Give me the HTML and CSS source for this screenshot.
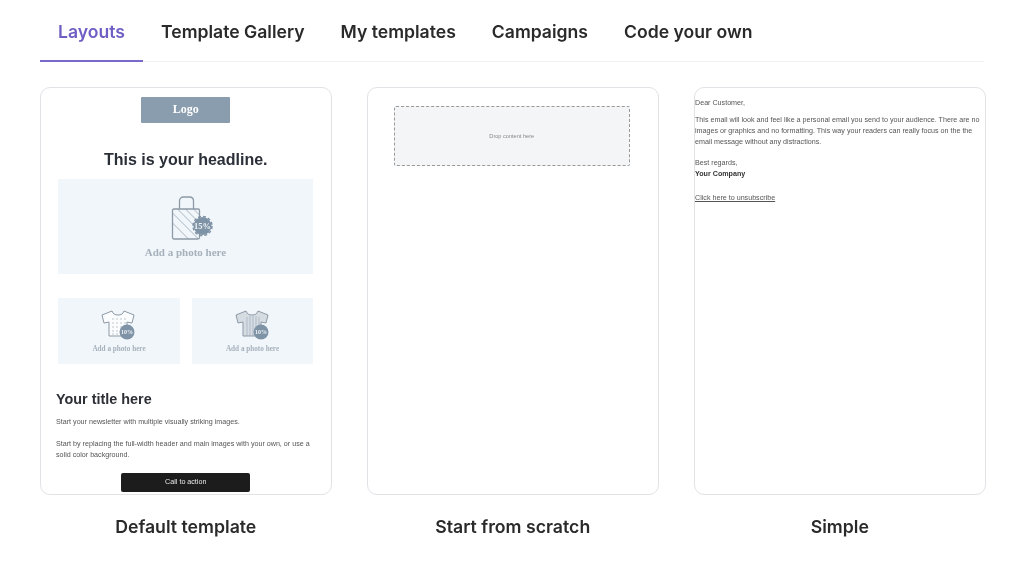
FILE: index.html
```html
<!DOCTYPE html>
<html lang="en">
<head>
    <meta charset="UTF-8">
    <title>Layouts</title>
    <link rel="stylesheet" href="styles.css">
</head>
<body>
    <nav class="tabs">
        <a class="tab active">Layouts</a>
        <a class="tab">Template Gallery</a>
        <a class="tab">My templates</a>
        <a class="tab">Campaigns</a>
        <a class="tab">Code your own</a>
    </nav>

    <div class="layouts">
        <div class="layout">
            <div class="card card-default">
                <div class="logo">Logo</div>
                <h2 class="headline">This is your headline.</h2>
                <div class="photo photo-main">
                    <svg width="60" height="46" viewBox="-15.5 0 60 46">
                        <defs>
                            <clipPath id="bagclip"><rect x="1" y="13" width="27" height="30"/></clipPath>
                        </defs>
                        <path d="M8 13V5c0-3 2-4 4-4h6c2 0 4 1 4 4v8" fill="none" stroke="#8c99a6" stroke-width="1.3"/>
                        <g clip-path="url(#bagclip)" stroke="#a9b4bf" stroke-width="1" fill="none">
                            <path d="M-6 20L18 44M-2 14L28 44M6 13L36 43M14 13L44 43M22 13L52 43"/>
                        </g>
                        <rect x="1" y="13" width="27" height="30" rx="1.500" fill="none" stroke="#8c99a6" stroke-width="1.3"/>
                        <circle cx="31" cy="30" r="9" fill="#7f93a6"/>
                        <circle cx="31" cy="30" r="9.500" fill="none" stroke="#7f93a6" stroke-width="1.500" stroke-dasharray="3 2"/>
                        <text class="badge-text" x="31" y="33" text-anchor="middle" font-size="8.500">15%</text>
                    </svg>
                    <div class="photo-label">Add a photo here</div>
                </div>
                <div class="photo-row">
                    <div class="photo photo-small">
                        <svg width="36" height="30" viewBox="0 0 36 30">
                            <path d="M11 1L1 5l2 8 5-1v14h18V12l5 1 2-8-10-4c-1 3-3 4-6 4s-5-1-6-4z" fill="#fbfcfd" stroke="#8c99a6" stroke-width="1"/>
                            <g fill="#a9b4bf">
                                <circle cx="12" cy="9" r=".7"/><circle cx="16" cy="9" r=".7"/><circle cx="20" cy="9" r=".7"/><circle cx="24" cy="9" r=".7"/>
                                <circle cx="12" cy="13" r=".7"/><circle cx="16" cy="13" r=".7"/><circle cx="20" cy="13" r=".7"/><circle cx="24" cy="13" r=".7"/>
                                <circle cx="12" cy="17" r=".7"/><circle cx="16" cy="17" r=".7"/><circle cx="20" cy="17" r=".7"/>
                                <circle cx="12" cy="21" r=".7"/><circle cx="16" cy="21" r=".7"/><circle cx="12" cy="24" r=".7"/><circle cx="16" cy="24" r=".7"/>
                            </g>
                            <circle cx="26" cy="22" r="7.500" fill="#7f93a6"/>
                            <text class="badge-text" x="26" y="24" text-anchor="middle" font-size="6">10%</text>
                        </svg>
                        <div class="photo-label">Add a photo here</div>
                    </div>
                    <div class="photo photo-small">
                        <svg width="36" height="30" viewBox="0 0 36 30">
                            <path d="M11 1L1 5l2 8 5-1v14h18V12l5 1 2-8-10-4c-1 3-3 4-6 4s-5-1-6-4z" fill="#d5dce2" stroke="#8c99a6" stroke-width="1"/>
                            <path d="M12 7v19M15 6v20M18 6v20M21 6v20M24 7v19" stroke="#a3afba" stroke-width=".7"/>
                            <circle cx="26" cy="22" r="7.500" fill="#7f93a6"/>
                            <text class="badge-text" x="26" y="24" text-anchor="middle" font-size="6">10%</text>
                        </svg>
                        <div class="photo-label">Add a photo here</div>
                    </div>
                </div>
                <h3 class="title">Your title here</h3>
                <p class="small-text">Start your newsletter with multiple visually striking images.</p>
                <p class="small-text">Start by replacing the full-width header and main images with your own, or use a solid color background.</p>
                <div class="cta">Call to action</div>
            </div>
            <div class="caption">Default template</div>
        </div>

        <div class="layout">
            <div class="card card-scratch">
                <div class="dropzone">Drop content here</div>
            </div>
            <div class="caption">Start from scratch</div>
        </div>

        <div class="layout">
            <div class="card card-simple">
                <p>Dear Customer,</p>
                <p>This email will look and feel like a personal email you send to your audience. There are no images or graphics and no formatting. This way your readers can really focus on the the email message without any distractions.</p>
                <p>Best regards,<br><b>Your Company</b></p>
                <p><u>Click here to unsubscribe</u></p>
            </div>
            <div class="caption">Simple</div>
        </div>
    </div>
</body>
</html>
```

FILE: styles.css
```css
html, body {
    margin: 0;
    background: #fff;
    font-family: Inter, "Liberation Sans", sans-serif;
    color: #222;
}

body {
    padding: 0 40px;
    height: 565px;
    box-sizing: border-box;
    overflow: hidden;
    filter: blur(0.45px);
}

.tabs {
    display: flex;
    height: 62px;
    border-bottom: 1px solid #f0f1f3;
    box-sizing: border-box;
}

.tab {
    padding: 20px 18px 0;
    font-size: 17.6px;
    line-height: 23px;
    font-weight: 600;
    color: #2a2a2a;
    box-sizing: border-box;
    height: 62px;
}

.tab.active {
    color: #6f5fc4;
    border-bottom: 2px solid #7a69cc;
}

.layouts {
    display: grid;
    grid-template-columns: 291.5px 291.5px 291.5px;
    column-gap: 35.5px;
    margin-top: 25px;
}

.caption {
    margin-top: 20px;
    text-align: center;
    font-size: 17.7px;
    line-height: 23px;
    font-weight: 600;
    color: #2a2a2a;
}

.card {
    height: 408px;
    box-sizing: border-box;
    border: 1px solid #e0e2e6;
    border-radius: 10px;
    overflow: hidden;
    font-family: "Liberation Sans", Arial, sans-serif;
}

.card-default {
    padding: 9px 15px 0;
}

.logo {
    width: 89px;
    height: 26px;
    margin: 0 auto;
    background: #8a9dae;
    border-radius: 1px;
    color: #fff;
    font-family: "Liberation Serif", serif;
    font-weight: bold;
    font-size: 12px;
    line-height: 25px;
    text-align: center;
}

.headline {
    margin: 27px 0 9px;
    font-size: 16px;
    line-height: 20px;
    text-align: center;
    color: #2b2f38;
}

.photo {
    background: #f1f6fa;
    margin-left: 2px;
    text-align: center;
}

.photo svg {
    display: block;
    margin: 0 auto;
}

.photo-main {
    height: 95px;
    width: 255px;
    padding-top: 17px;
    box-sizing: border-box;
}

.photo-label {
    font-family: "Liberation Serif", serif;
    font-weight: bold;
    color: #a7b1bb;
    font-size: 11px;
    line-height: 14px;
    margin-top: 3px;
}

.photo-row {
    display: grid;
    grid-template-columns: 124px 123px;
    column-gap: 10px;
    margin-top: 24px;
}

.photo-small {
    height: 66px;
    padding-top: 12px;
    box-sizing: border-box;
}

.photo-small .photo-label {
    font-size: 7.2px;
    line-height: 9px;
    margin-top: 5px;
}

.badge-text {
    fill: #eef2f5;
    font-family: "Liberation Serif", serif;
    font-weight: bold;
}

.title {
    margin: 26px 0 8px;
    font-size: 14.4px;
    line-height: 19px;
    color: #2d2f36;
}

.small-text {
    margin: 0 0 10px;
    font-size: 7.15px;
    line-height: 11px;
    color: #555;
}

.small-text + .small-text {
    margin-top: 11px;
}

.cta {
    width: 129px;
    height: 19px;
    margin: 12px auto 0;
    background: #1c1c1c;
    border-radius: 2px;
    color: #e8e8e8;
    font-size: 7.15px;
    line-height: 19px;
    text-align: center;
}

.card-scratch {
    padding: 18px 28px 0 26px;
}

.dropzone {
    height: 60px;
    border: 1px dashed #999;
    background: #f4f5f6;
    border-radius: 2px;
    box-sizing: border-box;
    font-size: 5.6px;
    line-height: 58px;
    color: #888;
    text-align: center;
}

.card-simple {
    padding: 10px 0 0;
    font-size: 7.15px;
    line-height: 11px;
    color: #555;
}

.card-simple p {
    margin: 0 0 6px;
}

.card-simple p + p + p {
    margin: 10px 0 13px;
}

.card-simple b {
    color: #333;
}
```
